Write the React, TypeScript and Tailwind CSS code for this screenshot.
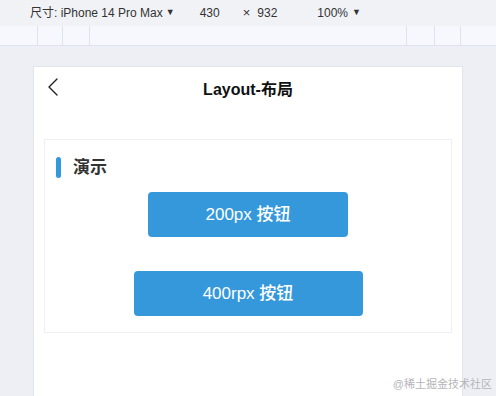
const font = { fontFamily: '"Helvetica Neue", "Liberation Sans", "Noto Sans CJK SC", sans-serif' };

function Toolbar() {
  return (
    <div className="bg-[#f1f2f6]">
      <div className="h-[26px] flex items-center text-[12px] text-[#333]">
        <span className="ml-[30px]">尺寸: iPhone 14 Pro Max</span>
        <span className="ml-[3px] text-[9px]">▼</span>
        <span className="ml-[25px]">430</span>
        <span className="ml-[23px] text-[13px]">×</span>
        <span className="ml-[7px]">932</span>
        <span className="ml-[40px]">100%</span>
        <span className="ml-[4px] text-[9px]">▼</span>
      </div>
      <div className="h-[20px] bg-[#f7f8fd] border-b border-[#dfe2f2] flex">
        <div className="w-[37px]" />
        <div className="w-[25px] border-l border-[#dfe2f2]" />
        <div className="w-[27px] border-l border-[#dfe2f2]" />
        <div className="flex-1 border-l border-[#dfe2f2]" />
        <div className="w-[28px] border-l border-[#dfe2f2]" />
        <div className="w-[26px] border-l border-[#dfe2f2]" />
        <div className="w-[36px] border-l border-[#dfe2f2]" />
      </div>
    </div>
  );
}

export default function App() {
  return (
    <div className="w-[496px] h-[396px] overflow-hidden bg-[#eeeff4] relative" style={font}>
      <Toolbar />
      <div className="ml-[33px] mt-[20px] w-[430px] h-[340px] bg-white border border-[#e4e5ea]">
        <div className="h-[44px] flex items-center relative">
          <svg className="absolute left-[13px] top-[11px]" width="12" height="18" viewBox="0 0 12 18" fill="none">
            <polyline points="10,1 2,9 10,17" stroke="#222" strokeWidth="1.4" strokeLinecap="round" strokeLinejoin="round" />
          </svg>
          <div className="flex-1 text-center text-[16px] font-bold text-[#111] mt-[1px]">Layout-布局</div>
        </div>
        <div className="mx-[10px] mt-[28px] h-[194px] border border-[#eeeff2] flex flex-col">
          <div className="flex items-center mt-[17px] ml-[11px] h-[21px]">
            <div className="w-[5px] h-[21px] rounded-full bg-[#3398dc]" />
            <span className="ml-[12px] text-[17px] font-bold text-[#333]">演示</span>
          </div>
          <div className="flex flex-col items-center">
            <button className="mt-[14px] w-[200px] h-[45px] rounded-[4px] bg-[#3498db] text-white text-[17px] font-medium">
              200px 按钮
            </button>
            <button className="mt-[34px] w-[229px] h-[45px] rounded-[4px] bg-[#3498db] text-white text-[17px] font-medium">
              400rpx 按钮
            </button>
          </div>
        </div>
      </div>
      <div className="absolute right-[4px] bottom-[4px] text-[11px] text-[#b5b5b8]">@稀土掘金技术社区</div>
    </div>
  );
}
